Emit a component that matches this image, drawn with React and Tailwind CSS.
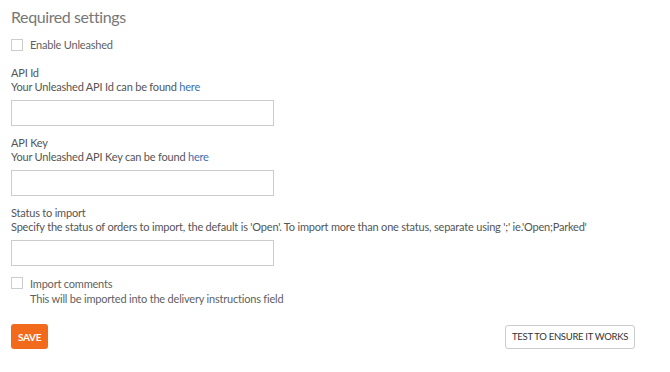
export default function App() {
  return (
    <div className="w-[670px] h-[372px] bg-white pl-[11px] pr-[35px] pt-[7px] text-[#555] text-[11px] leading-[14px] tracking-[-0.2px]" style={{ fontFamily: "Lato, 'Liberation Sans', sans-serif" }}>
      <h2 className="text-[16px] leading-[20px] text-[#777] font-normal tracking-[-0.4px]">Required settings</h2>
      <label className="flex items-center gap-[7px] mt-[11px] text-[#5f5f5f]">
        <span className="w-[12px] h-[12px] border border-[#ccc] bg-white inline-block" />
        <span>Enable Unleashed</span>
      </label>

      <div className="mt-[14px]">
        <div>API Id</div>
        <div>Your Unleashed API Id can be found <span className="text-[#3a6fb0]">here</span></div>
        <input className="block mt-[6px] w-[263px] h-[26px] border border-[#ccc] bg-white outline-none" />
      </div>

      <div className="mt-[10px]">
        <div>API Key</div>
        <div>Your Unleashed API Key can be found <span className="text-[#3a6fb0]">here</span></div>
        <input className="block mt-[6px] w-[263px] h-[26px] border border-[#ccc] bg-white outline-none" />
      </div>

      <div className="mt-[10px]">
        <div>Status to import</div>
        <div>Specify the status of orders to import, the default is 'Open'. To import more than one status, separate using ';' ie.'Open;Parked'</div>
        <input className="block mt-[6px] w-[263px] h-[26px] border border-[#ccc] bg-white outline-none" />
      </div>

      <div className="flex gap-[7px] mt-[10px] text-[#5f5f5f]">
        <span className="w-[12px] h-[12px] border border-[#ccc] bg-white inline-block mt-[1px]" />
        <div className="leading-[15px]">
          <div>Import comments</div>
          <div>This will be imported into the delivery instructions field</div>
        </div>
      </div>

      <div className="flex justify-between items-center mt-[18px]">
        <button className="h-[25px] px-[7px] rounded-[3px] bg-[#f26a1b] text-white text-[10px] font-bold uppercase tracking-[-0.3px]">Save</button>
        <button className="h-[24px] px-[6px] rounded-[3px] border border-[#ccc] bg-white text-[#333] text-[9.5px] uppercase tracking-[-0.3px]">Test to ensure it works</button>
      </div>
    </div>
  );
}
